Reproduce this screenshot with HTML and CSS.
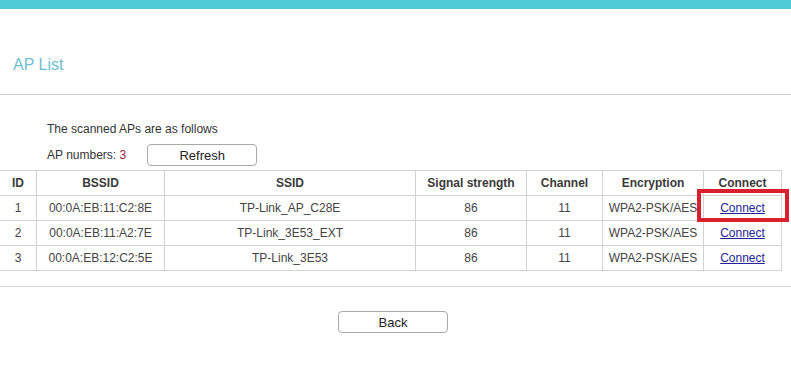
FILE: index.html
```html
<!DOCTYPE html>
<html lang="en">

<head>
  <meta charset="UTF-8">
  <meta name="viewport" content="width=device-width, initial-scale=1.0">
  <title>AP List</title>
  <link rel="stylesheet" href="styles.css">
</head>

<body>
  <div class="top-bar"></div>

  <h2 class="page-title">AP List</h2>

  <div class="intro">
    <p>The scanned APs are as follows</p>
    <div class="count-row">
      <span>AP numbers: <span class="count">3</span></span>
      <button type="button" class="btn refresh">Refresh</button>
    </div>
  </div>

  <table class="ap-table">
    <thead>
      <tr>
        <th class="c-id">ID</th>
        <th class="c-bssid">BSSID</th>
        <th class="c-ssid">SSID</th>
        <th class="c-signal">Signal strength</th>
        <th class="c-channel">Channel</th>
        <th class="c-enc">Encryption</th>
        <th class="c-conn">Connect</th>
      </tr>
    </thead>
    <tbody>
      <tr>
        <td>1</td>
        <td>00:0A:EB:11:C2:8E</td>
        <td>TP-Link_AP_C28E</td>
        <td>86</td>
        <td>11</td>
        <td>WPA2-PSK/AES</td>
        <td class="conn-cell"><a href="#">Connect</a><span class="highlight"></span></td>
      </tr>
      <tr>
        <td>2</td>
        <td>00:0A:EB:11:A2:7E</td>
        <td>TP-Link_3E53_EXT</td>
        <td>86</td>
        <td>11</td>
        <td>WPA2-PSK/AES</td>
        <td><a href="#">Connect</a></td>
      </tr>
      <tr>
        <td>3</td>
        <td>00:0A:EB:12:C2:5E</td>
        <td>TP-Link_3E53</td>
        <td>86</td>
        <td>11</td>
        <td>WPA2-PSK/AES</td>
        <td><a href="#">Connect</a></td>
      </tr>
    </tbody>
  </table>

  <div class="footer">
    <button type="button" class="btn back">Back</button>
  </div>
</body>

</html>
```

FILE: styles.css
```css
/* Page */

body {
  margin: 0;
  font-family: "Liberation Sans", Arial, sans-serif;
  font-size: 12px;
  color: #333;
  background: #fff;
}

.top-bar {
  height: 9px;
  background-color: #4ec9d6;
}

.page-title {
  margin: 0;
  padding: 47px 0 0 13px;
  height: 38px;
  font-size: 16px;
  font-weight: normal;
  color: #6cc0cf;
  border-bottom: 1px solid #cfcfcf;
}

/* Intro */

.intro {
  padding: 21px 0 0 47px;
}

.intro p {
  margin: 0;
  line-height: 26px;
}

.count-row {
  display: flex;
  align-items: center;
  gap: 21px;
  height: 26px;
}

.count {
  color: #9e1b3a;
}

.btn {
  font-family: "Liberation Sans", Arial, sans-serif;
  font-size: 13px;
  color: #222;
  background: #fff;
  border: 1px solid #a9a9a9;
  border-radius: 4px;
  height: 22px;
  padding: 0;
  cursor: pointer;
}

.refresh {
  width: 110px;
}

/* Table */

.ap-table {
  width: 782px;
  margin-top: 2px;
  border-collapse: collapse;
  text-align: center;
}

.ap-table th,
.ap-table td {
  border: 1px solid #d2d2d2;
  height: 24px;
  padding: 0;
  color: #444;
}

.ap-table tr > :first-child {
  border-left: none;
}

.ap-table th {
  font-weight: bold;
  color: #3a3a3a;
}

.c-id { width: 36px; }
.c-bssid { width: 127px; }
.c-ssid { width: 250px; }
.c-signal { width: 110px; }
.c-channel { width: 75px; }
.c-enc { width: 100px; }

.ap-table a {
  color: #23239b;
}

.conn-cell {
  position: relative;
}

.highlight {
  position: absolute;
  left: -7px;
  top: -7px;
  width: 84px;
  height: 25px;
  border: 4px solid #d8212d;
}

/* Footer */

.footer {
  margin-top: 15px;
  border-top: 1px solid #d2d2d2;
  width: 791px;
  padding-top: 24px;
}

.back {
  display: block;
  width: 110px;
  margin-left: 338px;
}
```
